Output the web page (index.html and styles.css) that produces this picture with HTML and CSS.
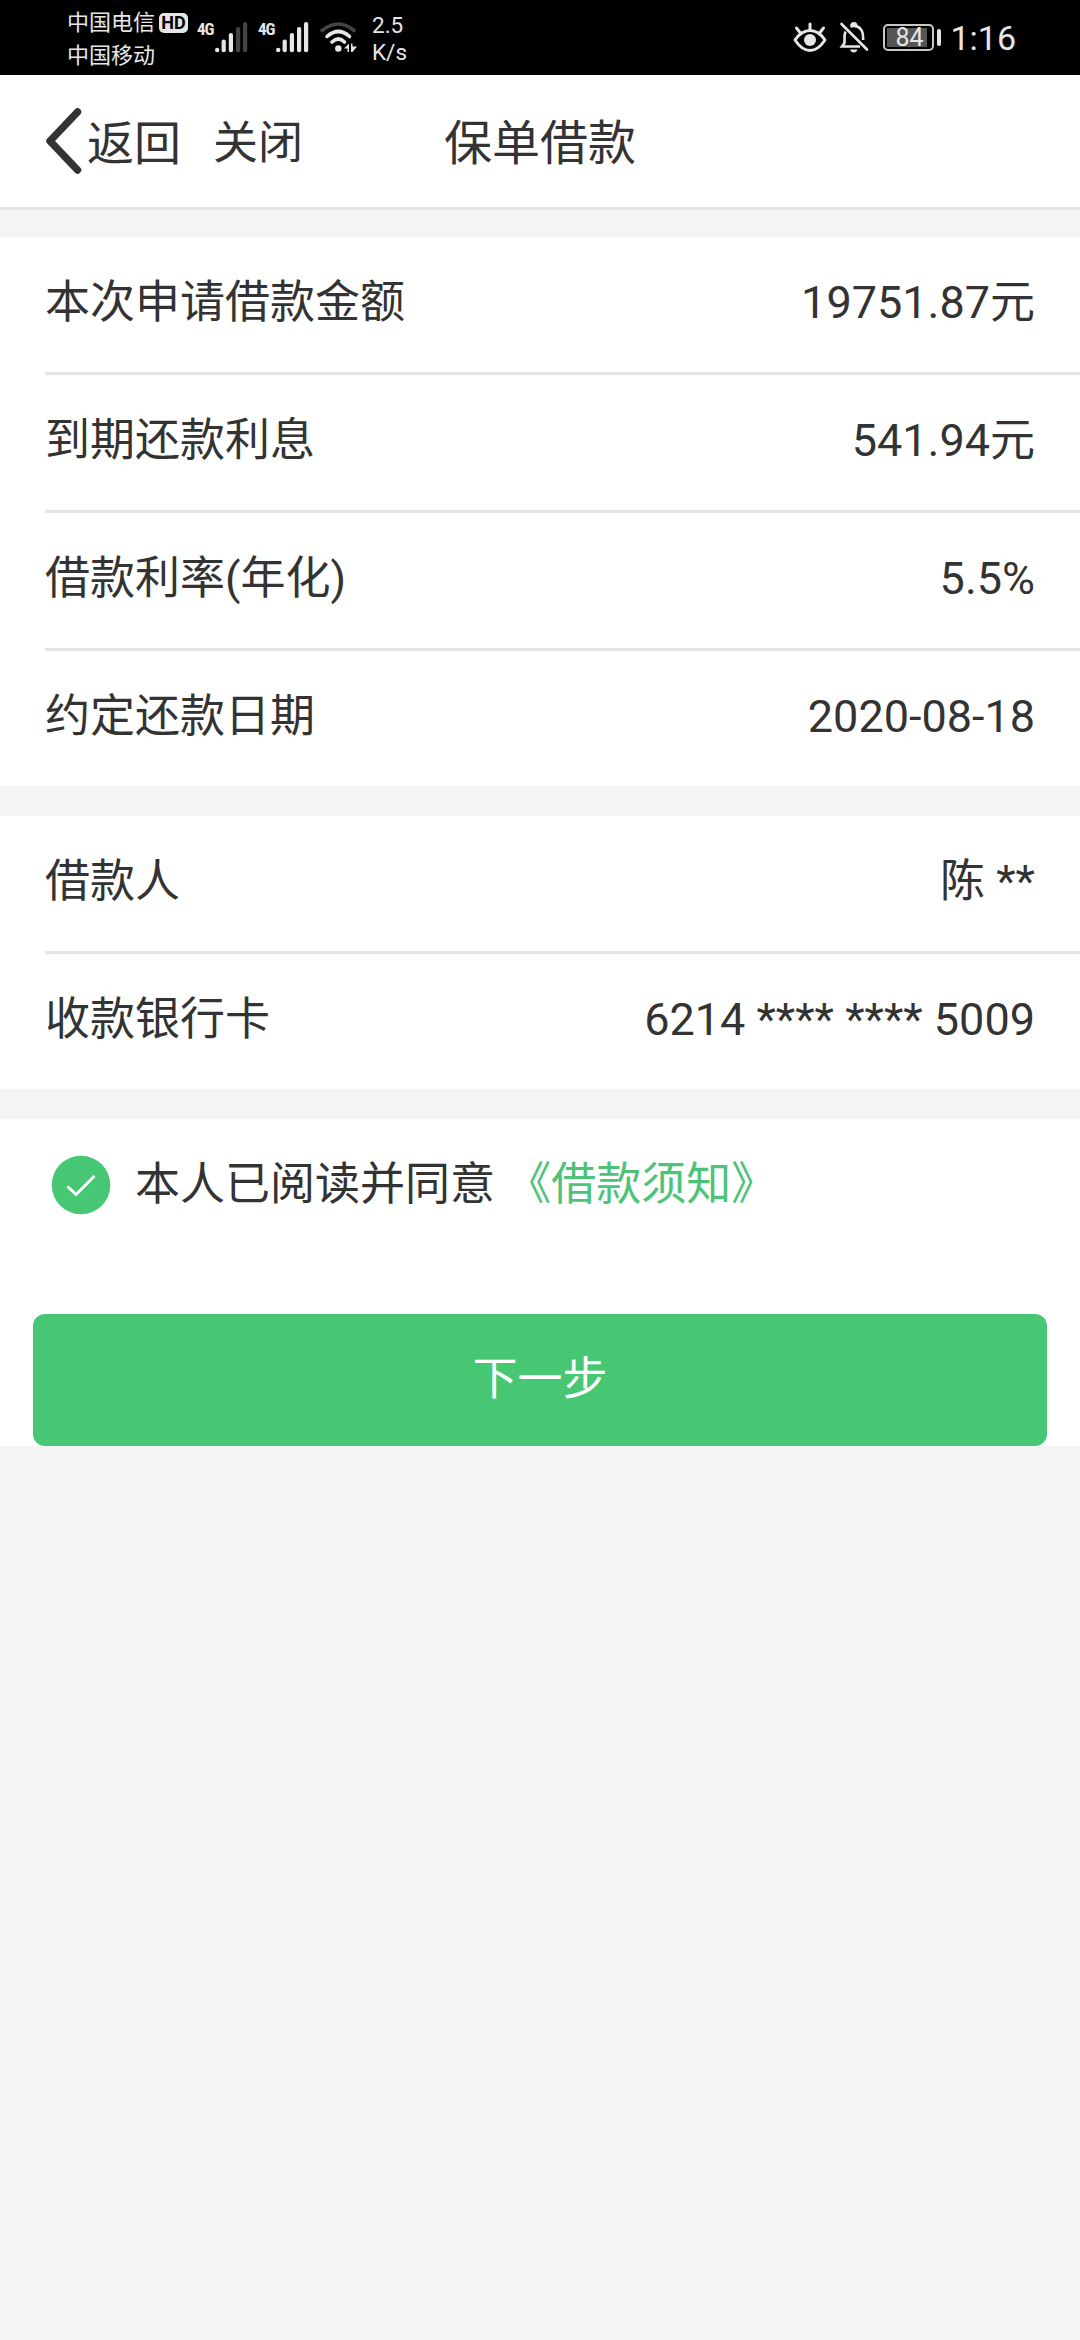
FILE: index.html
```html
<!DOCTYPE html>
<html lang="zh-CN">
<head>
    <meta charset="UTF-8">
    <title>保单借款</title>
    <link rel="stylesheet" href="styles.css">
</head>
<body>
    <div class="status">
        <div class="carrier">
            <div class="line">中国电信<span class="hd">HD</span></div>
            <div class="line">中国移动</div>
        </div>
        <span class="net">4G</span>
        <svg class="signal" width="34" height="34" viewBox="18 0 34 34">
            <g fill="#e6e6e6">
                <circle cx="20.2" cy="30" r="2.2"/>
                <rect x="24.600" y="19.500" width="4.200" height="12.700" rx="2"/>
                <rect x="31.800" y="13" width="4.200" height="19.200" rx="2"/>
            </g>
            <g fill="#444">
                <rect x="39" y="7" width="4.200" height="25.200" rx="2"/>
                <rect x="46" y="2" width="4.200" height="30.200" rx="2"/>
            </g>
        </svg>
        <span class="net second">4G</span>
        <svg class="signal" width="34" height="34" viewBox="18 0 34 34">
            <g fill="#e6e6e6">
                <circle cx="20.2" cy="30" r="2.2"/>
                <rect x="24.600" y="19.500" width="4.200" height="12.700" rx="2"/>
                <rect x="31.800" y="13" width="4.200" height="19.200" rx="2"/>
                <rect x="39" y="7" width="4.200" height="25.200" rx="2"/>
                <rect x="46" y="2" width="4.200" height="30.200" rx="2"/>
            </g>
        </svg>
        <svg class="wifi" width="38" height="34" viewBox="0 0 38 34">
            <g fill="none" stroke="#e6e6e6" stroke-width="3.6" stroke-linecap="round">
                <path d="M2 10.500Q18.500 -2.500 34 10.500" stroke="#444"/>
                <path d="M7 16.500Q18.500 6.500 29.500 16.500"/>
                <path d="M12 22Q18.500 16 24.500 22"/>
            </g>
            <circle cx="18.300" cy="28.500" r="3.200" fill="#e6e6e6"/>
            <path d="M24 28.500L29 23.500V32H27.500V28.500ZM31 23.500H32.500V26.500H37L32.500 32H31Z" fill="#e6e6e6"/>
        </svg>
        <div class="speed">
            <div>2.5</div>
            <div>K/s</div>
        </div>
        <div class="status-right">
            <svg class="eye" width="34" height="34" viewBox="0 0 34 34">
                <g fill="none" stroke="#e6e6e6" stroke-width="3" stroke-linecap="round">
                    <path d="M2 20Q8.500 10.500 17 10.500T32 20Q25 30.500 17 30.500T2 20Z" stroke-linejoin="round"/>
                    <path d="M17 4V9.500M3.500 8L7 12.500M30.500 8L27 12.500"/>
                </g>
                <circle cx="17" cy="20" r="6" fill="#e6e6e6"/>
            </svg>
            <svg class="bell" width="30" height="34" viewBox="0 0 30 34">
                <g fill="none" stroke="#e6e6e6" stroke-width="2.600">
                    <path d="M2.500 4L28 29.500" stroke-linecap="round"/>
                    <path d="M6.500 11.500Q5.500 14 5.500 17V23L3 26.500H21"/>
                    <path d="M11.500 6.500Q18 4.500 22 9.500Q24.200 12 24.200 20"/>
                </g>
                <path d="M11 6Q11.500 2 15 2T18.500 6ZM11 29.500H18.500Q17.500 32.500 14.700 32.500T11 29.500Z" fill="#e6e6e6"/>
            </svg>
            <div class="battery"><span>84</span></div>
            <i class="nub"></i>
            <span class="time">1:16</span>
        </div>
    </div>

    <div class="header">
        <svg class="back" width="37" height="68" viewBox="0 0 37 68">
            <path d="M32.500 5L5 34L32.500 63" fill="none" stroke="#333" stroke-width="7.500" stroke-linecap="round" stroke-linejoin="round"/>
        </svg>
        <span class="return">返回</span>
        <span class="close">关闭</span>
        <h1 class="title">保单借款</h1>
    </div>

    <ul class="list">
        <li><span>本次申请借款金额</span><span>19751.87元</span></li>
        <li><span>到期还款利息</span><span>541.94元</span></li>
        <li><span>借款利率(年化)</span><span>5.5%</span></li>
        <li><span>约定还款日期</span><span>2020-08-18</span></li>
    </ul>

    <ul class="list">
        <li><span>借款人</span><span>陈 **</span></li>
        <li><span>收款银行卡</span><span>6214 **** **** 5009</span></li>
    </ul>

    <div class="confirm">
        <div class="agree">
            <svg class="check" width="60" height="60" viewBox="0 0 60 60">
                <circle cx="30" cy="30" r="29.300" fill="#47c674"/>
                <path d="M16.500 31.500L25 39.500L43.500 21" fill="none" stroke="#fff" stroke-width="3"/>
            </svg>
            <span>本人已阅读并同意 <a class="link">《借款须知》</a></span>
        </div>
        <div class="btn">下一步</div>
    </div>
</body>
</html>
```
FILE: styles.css
```css
*{
    margin: 0;
    padding: 0;
    box-sizing: border-box;
}
body{
    width: 1080px;
    min-height: 2340px;
    background: #f4f4f4;
    color: #333;
    font-family: Roboto, "Noto Sans CJK SC", sans-serif;
    font-size: 45px;
}
svg{
    display: block;
    flex: none;
}
/* 状态栏 */
.status{
    height: 75px;
    background: #000;
    color: #e6e6e6;
    display: flex;
    align-items: flex-start;
    padding-left: 67px;
}
.carrier{
    width: 130px;
    padding-top: 6px;
    font-size: 22px;
}
.carrier .line{
    height: 33px;
    line-height: 33px;
    display: flex;
}
.hd{
    width: 29px;
    height: 20px;
    margin: 7px 0 0 4px;
    border-radius: 5px;
    background: #e6e6e6;
    color: #000;
    font-size: 18px;
    font-weight: bold;
    line-height: 20px;
    text-align: center;
}
.net{
    width: 18px;
    margin-top: 18px;
    font-family: "Roboto Condensed", Roboto, sans-serif;
    font-size: 17px;
    font-weight: bold;
    letter-spacing: -1px;
    line-height: 22px;
    white-space: nowrap;
}
.signal{
    margin-top: 20px;
}
.second{
    margin-left: 9px;
}
.wifi{
    margin: 20px 0 0 10px;
}
.speed{
    margin: 12px 0 0 14px;
    font-size: 22.5px;
    line-height: 27px;
}
.status-right{
    margin-left: auto;
    padding-right: 64px;
    display: flex;
}
.eye{
    margin-top: 20px;
}
.bell{
    margin: 20px 0 0 12px;
}
.battery{
    width: 51px;
    height: 27px;
    margin: 24px 0 0 14px;
    border: 2px solid #c8c8c8;
    border-radius: 5px;
    padding: 2px;
}
.battery span{
    display: block;
    width: 40px;
    height: 19px;
    background: #555;
    font-size: 25px;
    line-height: 19px;
    padding-left: 8px;
}
.nub{
    width: 4px;
    height: 17px;
    margin: 29px 0 0 3px;
    border-radius: 2px;
    background: #e6e6e6;
}
.time{
    margin-left: 9px;
    font-size: 34px;
    line-height: 76px;
}
/* 标题栏 */
.header{
    height: 135px;
    background: #fff;
    border-bottom: 3px solid #e5e5e5;
    display: grid;
    grid-template-columns: 42px 126px 227px 200px;
    align-items: center;
    padding-left: 45px;
    margin-bottom: 27px;
    line-height: 60px;
}
.return{
    padding-top: 5px;
    font-size: 47px;
}
.close{
    padding-top: 6px;
}
.title{
    padding-top: 5px;
    font-size: 48px;
    font-weight: normal;
    text-align: center;
}
/* 列表 */
.list{
    list-style: none;
    background: #fff;
    padding-left: 45px;
    margin-bottom: 30px;
}
.list li{
    display: flex;
    justify-content: space-between;
    height: 138px;
    padding-right: 45px;
    line-height: 131px;
    border-bottom: 3px solid #e5e5e5;
}
.list li:last-child{
    height: 135px;
    border-bottom: 0;
}
/* 同意条款 */
.confirm{
    background: #fff;
    padding: 0 33px;
}
.agree{
    height: 195px;
    display: flex;
    padding: 36px 0 0 18px;
    line-height: 59px;
}
.check{
    margin-right: 24px;
}
.link{
    color: #4dc37a;
}
.btn{
    height: 132px;
    background: #47c674;
    color: #fff;
    border-radius: 12px;
    line-height: 132px;
    text-align: center;
}
```
